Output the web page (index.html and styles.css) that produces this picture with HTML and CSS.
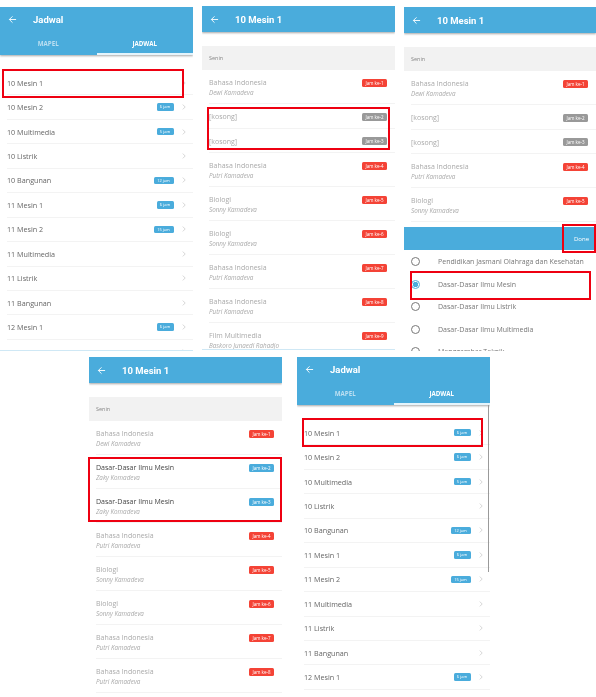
FILE: index.html
```html
<!DOCTYPE html>
<html lang="en">

<head>
  <meta charset="UTF-8">
  <title>Jadwal</title>
  <link rel="stylesheet" href="styles.css">
</head>

<body>
  <div class="shots shots-top">

    <section class="screen screen-classes">
      <div class="view">
        <header class="bar bar-tabs">
          <div class="bar-title"><svg class="back" viewBox="0 0 10 10"><path d="M9 5H1.500M5 1.500L1.500 5 5 8.500"/></svg><span>Jadwal</span></div>
          <div class="tabs"><span class="tab">MAPEL</span><span class="tab tab-on">JADWAL</span></div>
        </header>
        <ul class="classes">
          <li class="cls"><span class="cls-name">10 Mesin 1</span><svg class="chev" viewBox="0 0 6 10"><path d="M1 1l4 4-4 4"/></svg></li>
          <li class="cls"><span class="cls-name">10 Mesin 2</span><span class="pill">6 jam</span><svg class="chev" viewBox="0 0 6 10"><path d="M1 1l4 4-4 4"/></svg></li>
          <li class="cls"><span class="cls-name">10 Multimedia</span><span class="pill">5 jam</span><svg class="chev" viewBox="0 0 6 10"><path d="M1 1l4 4-4 4"/></svg></li>
          <li class="cls"><span class="cls-name">10 Listrik</span><svg class="chev" viewBox="0 0 6 10"><path d="M1 1l4 4-4 4"/></svg></li>
          <li class="cls"><span class="cls-name">10 Bangunan</span><span class="pill pill-wide">12 jam</span><svg class="chev" viewBox="0 0 6 10"><path d="M1 1l4 4-4 4"/></svg></li>
          <li class="cls"><span class="cls-name">11 Mesin 1</span><span class="pill">6 jam</span><svg class="chev" viewBox="0 0 6 10"><path d="M1 1l4 4-4 4"/></svg></li>
          <li class="cls"><span class="cls-name">11 Mesin 2</span><span class="pill pill-wide">15 jam</span><svg class="chev" viewBox="0 0 6 10"><path d="M1 1l4 4-4 4"/></svg></li>
          <li class="cls"><span class="cls-name">11 Multimedia</span><svg class="chev" viewBox="0 0 6 10"><path d="M1 1l4 4-4 4"/></svg></li>
          <li class="cls"><span class="cls-name">11 Listrik</span><svg class="chev" viewBox="0 0 6 10"><path d="M1 1l4 4-4 4"/></svg></li>
          <li class="cls"><span class="cls-name">11 Bangunan</span><svg class="chev" viewBox="0 0 6 10"><path d="M1 1l4 4-4 4"/></svg></li>
          <li class="cls"><span class="cls-name">12 Mesin 1</span><span class="pill">6 jam</span><svg class="chev" viewBox="0 0 6 10"><path d="M1 1l4 4-4 4"/></svg></li>
          <li class="cls"><span class="cls-name">12 Mesin 2</span><svg class="chev" viewBox="0 0 6 10"><path d="M1 1l4 4-4 4"/></svg></li>
        </ul>
      </div>
      <div class="mark mark-class-a"></div>
    </section>

    <section class="screen screen-day screen-raised">
      <div class="view">
        <header class="bar">
          <div class="bar-title"><svg class="back" viewBox="0 0 10 10"><path d="M9 5H1.500M5 1.500L1.500 5 5 8.500"/></svg><span>10 Mesin 1</span></div>
        </header>
        <div class="day">Senin</div>
        <ul class="slots">
          <li class="slot"><div class="slot-text"><p class="subject">Bahasa Indonesia</p><p class="teacher">Dewi Kamadeva</p></div><span class="tag tag-red">Jam ke-1</span></li>
          <li class="slot slot-empty"><div class="slot-text"><p class="subject">[kosong]</p></div><span class="tag tag-grey">Jam ke-2</span></li>
          <li class="slot slot-empty"><div class="slot-text"><p class="subject">[kosong]</p></div><span class="tag tag-grey">Jam ke-3</span></li>
          <li class="slot"><div class="slot-text"><p class="subject">Bahasa Indonesia</p><p class="teacher">Putri Kamadeva</p></div><span class="tag tag-red">Jam ke-4</span></li>
          <li class="slot"><div class="slot-text"><p class="subject">Biologi</p><p class="teacher">Sonny Kamadeva</p></div><span class="tag tag-red">Jam ke-5</span></li>
          <li class="slot"><div class="slot-text"><p class="subject">Biologi</p><p class="teacher">Sonny Kamadeva</p></div><span class="tag tag-red">Jam ke-6</span></li>
          <li class="slot"><div class="slot-text"><p class="subject">Bahasa Indonesia</p><p class="teacher">Putri Kamadeva</p></div><span class="tag tag-red">Jam ke-7</span></li>
          <li class="slot"><div class="slot-text"><p class="subject">Bahasa Indonesia</p><p class="teacher">Putri Kamadeva</p></div><span class="tag tag-red">Jam ke-8</span></li>
          <li class="slot"><div class="slot-text"><p class="subject">Film Multimedia</p><p class="teacher">Baskoro Junaedi Rahadjo</p></div><span class="tag tag-red">Jam ke-9</span></li>
        </ul>
      </div>
      <div class="mark mark-empty"></div>
    </section>

    <section class="screen screen-day screen-narrow">
      <div class="view view-picker">
        <header class="bar">
          <div class="bar-title"><svg class="back" viewBox="0 0 10 10"><path d="M9 5H1.500M5 1.500L1.500 5 5 8.500"/></svg><span>10 Mesin 1</span></div>
        </header>
        <div class="day">Senin</div>
        <ul class="slots slots-clipped">
          <li class="slot"><div class="slot-text"><p class="subject">Bahasa Indonesia</p><p class="teacher">Dewi Kamadeva</p></div><span class="tag tag-red">Jam ke-1</span></li>
          <li class="slot slot-empty"><div class="slot-text"><p class="subject">[kosong]</p></div><span class="tag tag-grey">Jam ke-2</span></li>
          <li class="slot slot-empty"><div class="slot-text"><p class="subject">[kosong]</p></div><span class="tag tag-grey">Jam ke-3</span></li>
          <li class="slot"><div class="slot-text"><p class="subject">Bahasa Indonesia</p><p class="teacher">Putri Kamadeva</p></div><span class="tag tag-red">Jam ke-4</span></li>
          <li class="slot"><div class="slot-text"><p class="subject">Biologi</p><p class="teacher">Sonny Kamadeva</p></div><span class="tag tag-red">Jam ke-5</span></li>
        </ul>
        <div class="picker-bar"><span>Done</span></div>
        <ul class="picker">
          <li class="option"><span class="radio"></span>Pendidikan Jasmani Olahraga dan Kesehatan</li>
          <li class="option"><span class="radio radio-on"></span>Dasar-Dasar Ilmu Mesin</li>
          <li class="option"><span class="radio"></span>Dasar-Dasar Ilmu Listrik</li>
          <li class="option"><span class="radio"></span>Dasar-Dasar Ilmu Multimedia</li>
          <li class="option"><span class="radio"></span>Menggambar Teknik</li>
        </ul>
      </div>
      <div class="mark mark-done"></div>
      <div class="mark mark-option"></div>
    </section>
  </div>

  <div class="shots shots-bottom">

    <section class="screen screen-day">
      <div class="view view-short">
        <header class="bar">
          <div class="bar-title"><svg class="back" viewBox="0 0 10 10"><path d="M9 5H1.500M5 1.500L1.500 5 5 8.500"/></svg><span>10 Mesin 1</span></div>
        </header>
        <div class="day">Senin</div>
        <ul class="slots">
          <li class="slot"><div class="slot-text"><p class="subject">Bahasa Indonesia</p><p class="teacher">Dewi Kamadeva</p></div><span class="tag tag-red">Jam ke-1</span></li>
          <li class="slot slot-filled"><div class="slot-text"><p class="subject">Dasar-Dasar Ilmu Mesin</p><p class="teacher">Zaky Komadeva</p></div><span class="tag tag-blue">Jam ke-2</span></li>
          <li class="slot slot-filled"><div class="slot-text"><p class="subject">Dasar-Dasar Ilmu Mesin</p><p class="teacher">Zaky Komadeva</p></div><span class="tag tag-blue">Jam ke-3</span></li>
          <li class="slot"><div class="slot-text"><p class="subject">Bahasa Indonesia</p><p class="teacher">Putri Kamadeva</p></div><span class="tag tag-red">Jam ke-4</span></li>
          <li class="slot"><div class="slot-text"><p class="subject">Biologi</p><p class="teacher">Sonny Kamadeva</p></div><span class="tag tag-red">Jam ke-5</span></li>
          <li class="slot"><div class="slot-text"><p class="subject">Biologi</p><p class="teacher">Sonny Kamadeva</p></div><span class="tag tag-red">Jam ke-6</span></li>
          <li class="slot"><div class="slot-text"><p class="subject">Bahasa Indonesia</p><p class="teacher">Putri Kamadeva</p></div><span class="tag tag-red">Jam ke-7</span></li>
          <li class="slot"><div class="slot-text"><p class="subject">Bahasa Indonesia</p><p class="teacher">Putri Kamadeva</p></div><span class="tag tag-red">Jam ke-8</span></li>
        </ul>
      </div>
      <div class="mark mark-filled"></div>
    </section>

    <section class="screen screen-classes">
      <div class="view view-short">
        <header class="bar bar-tabs">
          <div class="bar-title"><svg class="back" viewBox="0 0 10 10"><path d="M9 5H1.500M5 1.500L1.500 5 5 8.500"/></svg><span>Jadwal</span></div>
          <div class="tabs"><span class="tab">MAPEL</span><span class="tab tab-on">JADWAL</span></div>
        </header>
        <ul class="classes">
          <li class="cls"><span class="cls-name">10 Mesin 1</span><span class="pill">6 jam</span><svg class="chev" viewBox="0 0 6 10"><path d="M1 1l4 4-4 4"/></svg></li>
          <li class="cls"><span class="cls-name">10 Mesin 2</span><span class="pill">6 jam</span><svg class="chev" viewBox="0 0 6 10"><path d="M1 1l4 4-4 4"/></svg></li>
          <li class="cls"><span class="cls-name">10 Multimedia</span><span class="pill">5 jam</span><svg class="chev" viewBox="0 0 6 10"><path d="M1 1l4 4-4 4"/></svg></li>
          <li class="cls"><span class="cls-name">10 Listrik</span><svg class="chev" viewBox="0 0 6 10"><path d="M1 1l4 4-4 4"/></svg></li>
          <li class="cls"><span class="cls-name">10 Bangunan</span><span class="pill pill-wide">12 jam</span><svg class="chev" viewBox="0 0 6 10"><path d="M1 1l4 4-4 4"/></svg></li>
          <li class="cls"><span class="cls-name">11 Mesin 1</span><span class="pill">6 jam</span><svg class="chev" viewBox="0 0 6 10"><path d="M1 1l4 4-4 4"/></svg></li>
          <li class="cls"><span class="cls-name">11 Mesin 2</span><span class="pill pill-wide">15 jam</span><svg class="chev" viewBox="0 0 6 10"><path d="M1 1l4 4-4 4"/></svg></li>
          <li class="cls"><span class="cls-name">11 Multimedia</span><svg class="chev" viewBox="0 0 6 10"><path d="M1 1l4 4-4 4"/></svg></li>
          <li class="cls"><span class="cls-name">11 Listrik</span><svg class="chev" viewBox="0 0 6 10"><path d="M1 1l4 4-4 4"/></svg></li>
          <li class="cls"><span class="cls-name">11 Bangunan</span><svg class="chev" viewBox="0 0 6 10"><path d="M1 1l4 4-4 4"/></svg></li>
          <li class="cls"><span class="cls-name">12 Mesin 1</span><span class="pill">6 jam</span><svg class="chev" viewBox="0 0 6 10"><path d="M1 1l4 4-4 4"/></svg></li>
        </ul>
      </div>
      <div class="scrollbar"></div>
      <div class="mark mark-class-b"></div>
    </section>
  </div>
</body>

</html>
```

FILE: styles.css
```css
html,
body {
  margin: 0;
  padding: 0;
  background: #fff;
}

body {
  width: 596px;
  height: 697px;
  overflow: hidden;
  font-family: "Open Sans", sans-serif;
}

ul {
  list-style: none;
  margin: 0;
  padding: 0;
}

p {
  margin: 0;
}

.shots {
  display: flex;
  align-items: flex-start;
}

.shots-top {
  height: 357px;
  padding-top: 6px;
  box-sizing: border-box;
  gap: 9px;
}

.shots-bottom {
  padding-left: 89px;
  gap: 15px;
}

.screen {
  position: relative;
  width: 193px;
  flex: none;
}

.shots-top .screen {
  margin-top: 1px;
}

.shots-top .screen-raised {
  margin-top: 0;
}

.shots-top .screen-narrow {
  width: 192px;
}

.view {
  height: 344px;
  overflow: hidden;
  filter: blur(0.45px);
  border-bottom: 1px solid #cfe8f5;
  box-sizing: border-box;
}

.view-picker {
  display: flex;
  flex-direction: column;
  border-bottom: none;
}

.view-short {
  height: 340px;
  border-bottom: none;
}

.bar {
  background: #4aacdc;
  color: #fff;
  box-shadow: 0 1px 2px rgba(0, 0, 0, 0.35);
}

.bar-title {
  display: flex;
  align-items: center;
  height: 26px;
  padding-left: 8px;
  font-family: Roboto, sans-serif;
  font-size: 9.500px;
  font-weight: 700;
  box-sizing: border-box;
}

.bar-tabs .bar-title {
  height: 24px;
}

.bar-title .back {
  width: 9px;
  height: 9px;
  margin-right: 16px;
  flex: none;
}

.back path {
  fill: none;
  stroke: #fff;
  stroke-width: 1;
}

.tabs {
  display: flex;
  height: 24px;
}

.tab {
  flex: 1;
  text-align: center;
  font-size: 6.200px;
  font-weight: 700;
  line-height: 26px;
  color: #bcdff2;
}

.tab-on {
  color: #fff;
  border-bottom: 2px solid #e6f4fb;
  box-sizing: border-box;
}

/* class list */
.classes {
  margin-top: 16px;
}

.cls {
  display: flex;
  align-items: center;
  height: 24.450px;
  margin-left: 7px;
  font-size: 7.200px;
  color: #666;
  border-bottom: 1px solid #f3f3f3;
  box-sizing: border-box;
}

.cls-name {
  flex: 1;
}

.pill {
  width: 17px;
  height: 7.500px;
  margin-right: 8px;
  border-radius: 1.500px;
  background: #4aacdc;
  color: #fff;
  font-size: 4px;
  line-height: 7.500px;
  text-align: center;
}

.pill-wide {
  width: 20px;
}

.chev {
  width: 4px;
  height: 6px;
  margin-right: 7.500px;
  margin-left: auto;
  flex: none;
}

.pill + .chev {
  margin-left: 0;
}

.chev path {
  fill: none;
  stroke: #bbb;
  stroke-width: 1;
}

/* day schedule */
.day {
  margin-top: 14px;
  height: 24px;
  padding-left: 7px;
  background: #f2f2f2;
  color: #888;
  font-size: 5.500px;
  line-height: 24px;
}

.slot {
  display: flex;
  align-items: flex-start;
  justify-content: space-between;
  height: 34px;
  margin-left: 7px;
  padding: 8px 8px 0 0;
  border-bottom: 1px solid #f3f3f3;
  box-sizing: border-box;
}

.slot-empty {
  height: 24.500px;
}

.slots-clipped {
  height: 156px;
  overflow: hidden;
  flex: none;
}

.subject {
  font-size: 7px;
  line-height: 10px;
  color: #aaa;
}

.teacher {
  font-size: 6.300px;
  font-style: italic;
  line-height: 10px;
  color: #aaa;
}

.slot-filled .subject {
  color: #444;
}

.tag {
  width: 25px;
  height: 8px;
  margin-top: 0.500px;
  border-radius: 1.500px;
  color: #fff;
  font-size: 4.500px;
  line-height: 8px;
  text-align: center;
}

.tag-red {
  background: #f44336;
}

.tag-grey {
  background: #999;
}

.tag-blue {
  background: #4aacdc;
}

/* subject picker */
.picker-bar {
  display: flex;
  align-items: center;
  justify-content: flex-end;
  flex: none;
  height: 23px;
  padding-right: 7px;
  background: #4aacdc;
  color: #fff;
  font-size: 6px;
}

.picker {
  padding-top: 0.500px;
}

.option {
  display: flex;
  align-items: center;
  height: 22.500px;
  padding-left: 7px;
  color: #777;
  font-size: 7px;
}

.radio {
  width: 9px;
  height: 9px;
  margin-right: 18px;
  border: 1px solid #777;
  border-radius: 50%;
  box-sizing: border-box;
  flex: none;
}

.radio-on {
  border-color: #4aacdc;
  background: radial-gradient(circle, #4aacdc 0 2.500px, #fff 3px);
}

.scrollbar {
  position: absolute;
  top: 48px;
  right: 1px;
  width: 1px;
  height: 167px;
  background: #9a9a9a;
}

/* red call-out boxes drawn over the shots */
.mark {
  position: absolute;
  border: 2px solid #ee0011;
  box-sizing: border-box;
}

.mark-class-a {
  left: 2px;
  top: 62px;
  width: 182px;
  height: 29px;
}

.mark-class-b {
  left: 5px;
  top: 61px;
  width: 181px;
  height: 29px;
}

.mark-empty {
  left: 5px;
  top: 101px;
  width: 183px;
  height: 43px;
}

.mark-done {
  left: 158px;
  top: 217px;
  width: 34px;
  height: 29px;
}

.mark-option {
  left: 6px;
  top: 264px;
  width: 181px;
  height: 29px;
}

.mark-filled {
  left: -1px;
  top: 100px;
  width: 194px;
  height: 65px;
}
```
